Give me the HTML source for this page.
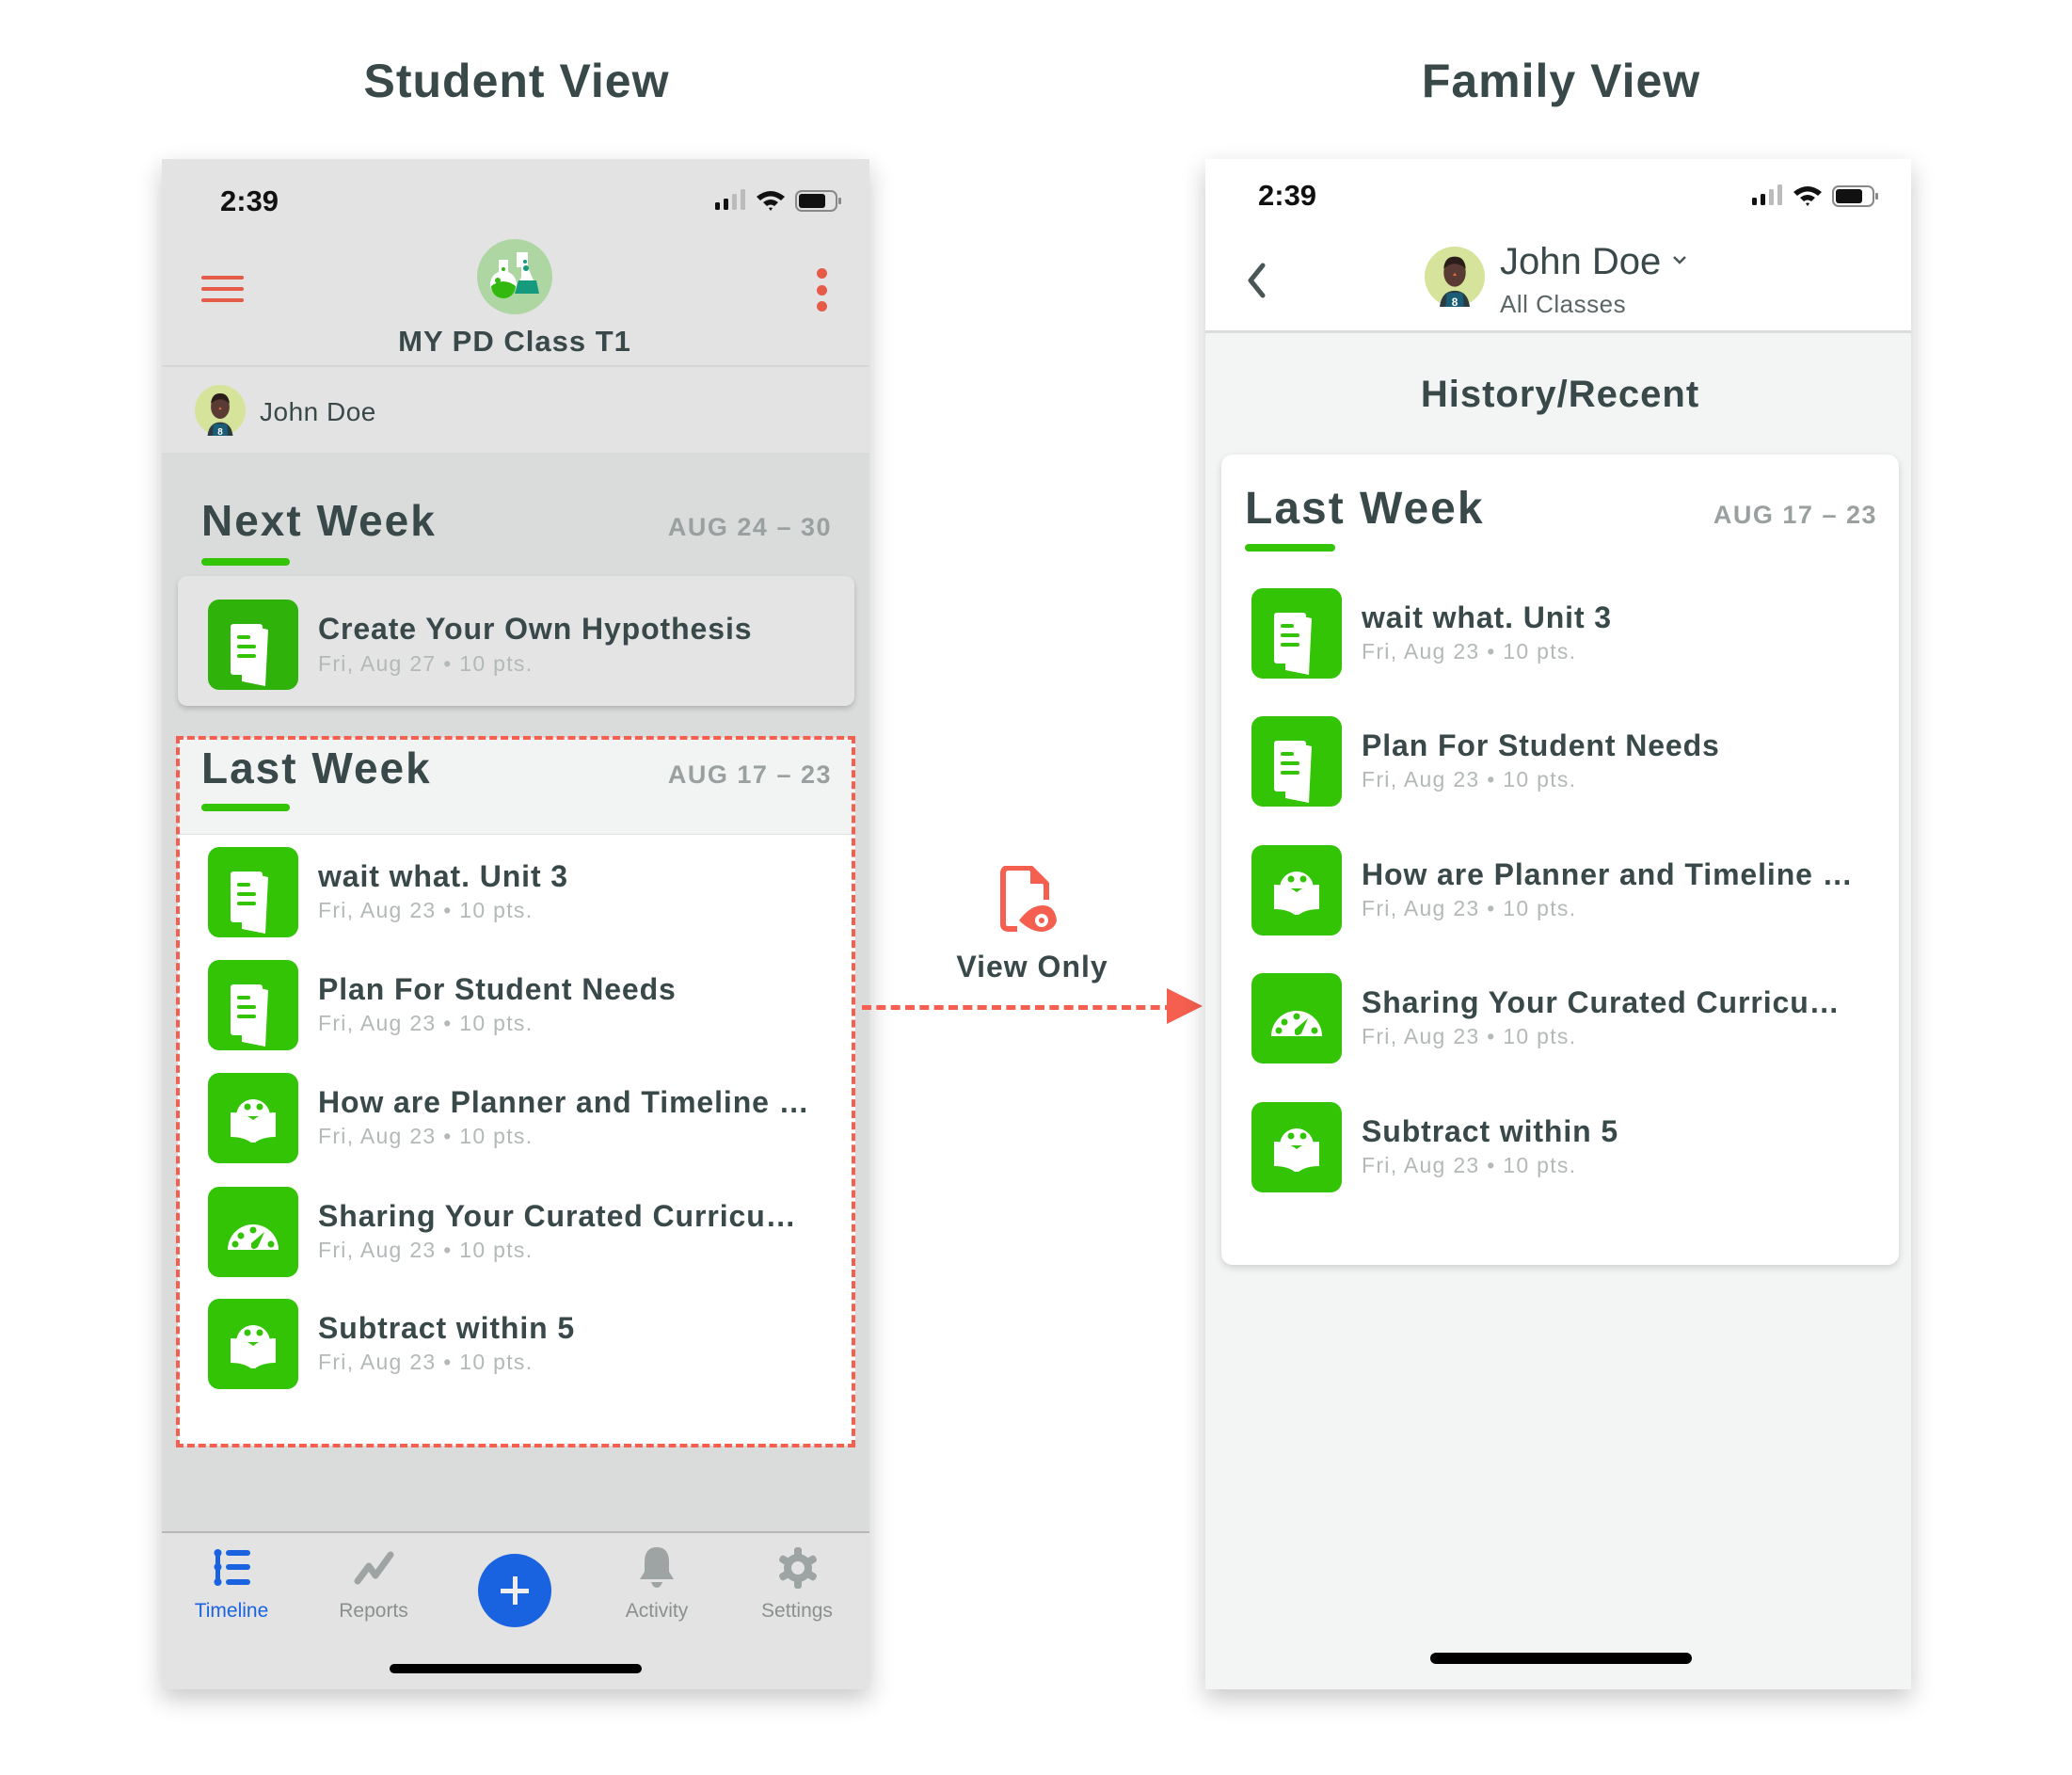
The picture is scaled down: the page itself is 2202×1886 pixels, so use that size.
<!DOCTYPE html>
<html><head><meta charset="utf-8">
<style>
*{margin:0;padding:0;box-sizing:border-box}
body{width:2202px;height:1886px;background:#fff;position:relative;overflow:hidden;font-family:"Liberation Sans",sans-serif;color:#394849}
.a{position:absolute;white-space:nowrap}
.h1{font-size:50px;font-weight:bold;color:#394849;transform:translateX(-50%);letter-spacing:1px}
.phone{position:absolute;top:169px;height:1626px;box-shadow:0 10px 24px rgba(0,0,0,.22)}
.ico{position:absolute;width:96px;height:96px;border-radius:12px;background:#33c406}
.t{font-size:32px;font-weight:bold;color:#394849;letter-spacing:0.9px}
.s{font-size:23px;color:#b3b8b8;letter-spacing:1.3px}
.wk{font-size:46px;font-weight:bold;color:#394849;letter-spacing:2px}
.dt{font-size:27px;font-weight:bold;color:#9aa0a0;letter-spacing:1.5px}
.ul{position:absolute;height:8px;border-radius:4px;background:#33c406}
</style></head><body>
<svg width="0" height="0" style="position:absolute">
<defs>
<symbol id="doc" viewBox="0 0 96 96">
<path d="M55 30 L64 32 L61 92 L36 87 L36 80 L55 80 Z" fill="#fff"/>
<rect x="24" y="26" width="34" height="54" rx="3" fill="#fff"/>
<rect x="31" y="38" width="14" height="4" rx="2" fill="#33c406"/>
<rect x="31" y="48" width="20" height="4" rx="2" fill="#33c406"/>
<rect x="31" y="58" width="20" height="4" rx="2" fill="#33c406"/>
</symbol>
<symbol id="book" viewBox="0 0 96 96">
<path d="M30 46 A18 18 0 0 1 66 46 Z" fill="#fff"/>
<circle cx="42" cy="36" r="3.5" fill="#33c406"/><circle cx="55" cy="36" r="3.5" fill="#33c406"/>
<path d="M24 42 Q38 42 48 50 Q58 42 72 42 L72 68 Q58 68 50 74 L46 74 Q38 68 24 68 Z" fill="#fff"/>
</symbol>
<symbol id="gauge" viewBox="0 0 96 96">
<path d="M21 67 A27 27 0 0 1 75 67 Z" fill="#fff"/>
<circle cx="48" cy="46" r="3.5" fill="#33c406"/><circle cx="35" cy="52" r="3.5" fill="#33c406"/>
<circle cx="29" cy="61" r="3.5" fill="#33c406"/><circle cx="67" cy="61" r="3.5" fill="#33c406"/>
<path d="M46 60 L60 48 L53 64 Q48 68 46 64 Z" fill="#33c406"/>
</symbol>
<symbol id="av" viewBox="0 0 60 60">
<circle cx="30" cy="30" r="30" fill="#d6e39a"/>
<path d="M15 60 Q17 44 30 44 Q43 44 45 60 Z" fill="#2c3b40"/>
<path d="M21 60 L22 46 L38 46 L39 60 Z" fill="#1a5d77"/>
<ellipse cx="30" cy="26" rx="11" ry="14" fill="#5a3b33"/>
<path d="M19 22 Q20 10 30 10 Q40 10 41 22 Q35 17 30 17 Q25 17 19 22Z" fill="#2a1d1a"/>
<path d="M28 29 L30 26 L32 29Z" fill="#e86a43"/>
<text x="30" y="59" font-size="11" fill="#fff" text-anchor="middle" font-family="Liberation Sans" font-weight="bold">8</text>
</symbol>
</defs></svg>

<div class="a h1" style="left:549px;top:57px">Student View</div>
<div class="a h1" style="left:1659px;top:57px">Family View</div>

<!-- LEFT PHONE -->
<div class="phone" style="left:172px;width:752px;background:#e3e3e3;overflow:hidden">
  <div class="a" style="left:0;top:219px;width:752px;height:2px;background:#d6d6d6"></div>
  <div class="a" style="left:0;top:312px;width:752px;height:1147px;background:#dadcdc"></div>
  <div class="a" style="left:0;top:1458px;width:752px;height:2px;background:#b8b8b8"></div>
</div>
<div class="a" style="left:234px;top:196px;font-size:31px;font-weight:bold;color:#111">2:39</div>
<svg class="a" style="left:760px;top:200px" width="135" height="28" viewBox="0 0 135 28">
<rect x="0" y="15" width="5" height="8" rx="1.5" fill="#111"/><rect x="9" y="11" width="5" height="12" rx="1.5" fill="#111"/>
<rect x="18" y="6" width="5" height="17" rx="1.5" fill="#bbb"/><rect x="27" y="1" width="5" height="22" rx="1.5" fill="#bbb"/>
<path d="M44 9 Q59 -3 74 9 L70 13 Q59 4 48 13Z M51 15 Q59 9 67 15 L63 19 Q59 16 55 19Z M57 21 L59 24 L61 21 Q59 20 57 21Z" fill="#111"/>
<rect x="86" y="3" width="43" height="21" rx="6" fill="none" stroke="#888" stroke-width="2"/>
<rect x="89" y="6" width="28" height="15" rx="3" fill="#111"/><rect x="131" y="10" width="3" height="7" rx="1" fill="#888"/>
</svg>
<div class="a" style="left:214px;top:293px;width:45px;height:4px;background:#e65a48;border-radius:2px"></div>
<div class="a" style="left:214px;top:305px;width:45px;height:4px;background:#e65a48;border-radius:2px"></div>
<div class="a" style="left:214px;top:317px;width:45px;height:4px;background:#e65a48;border-radius:2px"></div>
<div class="a" style="left:868px;top:285px;width:11px;height:11px;border-radius:50%;background:#e65a48"></div>
<div class="a" style="left:868px;top:303px;width:11px;height:11px;border-radius:50%;background:#e65a48"></div>
<div class="a" style="left:868px;top:320px;width:11px;height:11px;border-radius:50%;background:#e65a48"></div>
<svg class="a" style="left:507px;top:254px" width="80" height="80" viewBox="0 0 80 80">
<circle cx="40" cy="40" r="40" fill="#aed6a3"/>
<path d="M42 14 L54 14 L54 30 L66 58 L40 58 L47 40 L47 30 L42 30Z" fill="#fff"/>
<path d="M44 44 L63 44 L66 58 L40 58Z" fill="#169a7e"/>
<circle cx="52" cy="31" r="3" fill="#169a7e"/><circle cx="51" cy="24" r="2" fill="#169a7e"/>
<circle cx="28" cy="48" r="14" fill="#fff"/><rect x="23" y="22" width="10" height="16" fill="#fff"/>
<path d="M15 50 Q28 40 41 50 A13 13 0 0 1 15 50Z" fill="#33b80f"/>
<circle cx="22" cy="44" r="3" fill="#33b80f"/><circle cx="28" cy="32" r="2" fill="#33b80f"/>
</svg>
<div class="a" style="left:547px;top:345px;transform:translateX(-50%);font-size:31px;font-weight:bold;color:#394849;letter-spacing:1px">MY PD Class T1</div>
<svg class="a" style="left:207px;top:409px" width="54" height="54"><use href="#av"/></svg>
<div class="a" style="left:276px;top:422px;font-size:28px;color:#394849;letter-spacing:0.5px">John Doe</div>

<div class="a wk" style="left:214px;top:526px">Next Week</div>
<div class="a dt" style="right:1318px;top:545px">AUG 24 – 30</div>
<div class="ul" style="left:214px;top:593px;width:94px"></div>
<div class="a" style="left:189px;top:612px;width:719px;height:138px;background:#e4e4e4;border-radius:10px;box-shadow:0 3px 6px rgba(0,0,0,.18)"></div>
<div class="ico" style="left:221px;top:637px;background:#2fb20a"><svg width="96" height="96"><use href="#doc"/></svg></div>
<div class="a t" style="left:338px;top:650px">Create Your Own Hypothesis</div>
<div class="a s" style="left:338px;top:692px">Fri, Aug 27 • 10 pts.</div>

<div class="a" style="left:189px;top:784px;width:720px;height:102px;background:#f2f4f3"></div>
<div class="a" style="left:189px;top:886px;width:720px;height:650px;background:#fff;border-top:1px solid #dfe2e2"></div>
<div class="a" style="left:187px;top:782px;width:722px;height:756px;border:4px dashed #f45f4f"></div>
<div class="a wk" style="left:214px;top:789px">Last Week</div>
<div class="a dt" style="right:1318px;top:808px">AUG 17 – 23</div>
<div class="ul" style="left:214px;top:854px;width:94px"></div>

<div class="ico" style="left:221px;top:900px"><svg width="96" height="96"><use href="#doc"/></svg></div>
<div class="a t" style="left:338px;top:913px">wait what. Unit 3</div>
<div class="a s" style="left:338px;top:954px">Fri, Aug 23 • 10 pts.</div>
<div class="ico" style="left:221px;top:1020px"><svg width="96" height="96"><use href="#doc"/></svg></div>
<div class="a t" style="left:338px;top:1033px">Plan For Student Needs</div>
<div class="a s" style="left:338px;top:1074px">Fri, Aug 23 • 10 pts.</div>
<div class="ico" style="left:221px;top:1140px"><svg width="96" height="96"><use href="#book"/></svg></div>
<div class="a t" style="left:338px;top:1153px">How are Planner and Timeline …</div>
<div class="a s" style="left:338px;top:1194px">Fri, Aug 23 • 10 pts.</div>
<div class="ico" style="left:221px;top:1261px"><svg width="96" height="96"><use href="#gauge"/></svg></div>
<div class="a t" style="left:338px;top:1274px">Sharing Your Curated Curricu…</div>
<div class="a s" style="left:338px;top:1315px">Fri, Aug 23 • 10 pts.</div>
<div class="ico" style="left:221px;top:1380px"><svg width="96" height="96"><use href="#book"/></svg></div>
<div class="a t" style="left:338px;top:1393px">Subtract within 5</div>
<div class="a s" style="left:338px;top:1434px">Fri, Aug 23 • 10 pts.</div>

<svg class="a" style="left:226px;top:1646px" width="42" height="40" viewBox="0 0 42 40">
<rect x="3" y="2" width="5" height="36" rx="2.5" fill="#1a63e0"/>
<circle cx="5.5" cy="4" r="4" fill="#1a63e0"/><circle cx="5.5" cy="19" r="4" fill="#1a63e0"/><circle cx="5.5" cy="35" r="4" fill="#1a63e0"/>
<rect x="14" y="1" width="26" height="6" rx="3" fill="#1a63e0"/><rect x="14" y="16" width="26" height="6" rx="3" fill="#1a63e0"/><rect x="14" y="32" width="26" height="6" rx="3" fill="#1a63e0"/>
</svg>
<div class="a" style="left:246px;top:1700px;transform:translateX(-50%);font-size:21px;color:#1a63e0">Timeline</div>
<svg class="a" style="left:374px;top:1646px" width="48" height="40" viewBox="0 0 48 40">
<path d="M6 34 L18 18 L25 28 L41 6" fill="none" stroke="#9ea3a3" stroke-width="7" stroke-linecap="round" stroke-linejoin="round"/>
</svg>
<div class="a" style="left:397px;top:1700px;transform:translateX(-50%);font-size:21px;color:#8a8f8f">Reports</div>
<div class="a" style="left:508px;top:1651px;width:78px;height:78px;border-radius:50%;background:#1a63e0"></div>
<div class="a" style="left:545px;top:1675px;width:5px;height:30px;background:#eee"></div>
<div class="a" style="left:532px;top:1688px;width:30px;height:5px;background:#eee"></div>
<svg class="a" style="left:678px;top:1642px" width="40" height="46" viewBox="0 0 40 46">
<path d="M20 2 Q33 2 33 18 L33 28 L38 36 L2 36 L7 28 L7 18 Q7 2 20 2Z" fill="#9ea3a3"/>
<path d="M14 39 L26 39 Q24 45 20 45 Q16 45 14 39Z" fill="#9ea3a3"/>
</svg>
<div class="a" style="left:698px;top:1700px;transform:translateX(-50%);font-size:21px;color:#8a8f8f">Activity</div>
<svg class="a" style="left:826px;top:1643px" width="44" height="46" viewBox="0 0 44 46">
<g fill="#9ea3a3"><circle cx="22" cy="23" r="15"/>
<rect x="18" y="1" width="8" height="44" rx="3"/><rect x="18" y="1" width="8" height="44" rx="3" transform="rotate(60 22 23)"/><rect x="18" y="1" width="8" height="44" rx="3" transform="rotate(120 22 23)"/></g>
<circle cx="22" cy="23" r="7" fill="#e3e3e3"/>
</svg>
<div class="a" style="left:847px;top:1700px;transform:translateX(-50%);font-size:21px;color:#8a8f8f">Settings</div>
<div class="a" style="left:414px;top:1768px;width:268px;height:10px;border-radius:5px;background:#000"></div>

<svg class="a" style="left:1062px;top:920px" width="62" height="72" viewBox="0 0 62 72">
<path d="M10 2 L33 2 L50 19 L50 36" fill="none" stroke="#f45f4f" stroke-width="6" stroke-linejoin="round"/>
<path d="M10 2 Q4 2 4 8 L4 62 Q4 67 10 67 L19 67" fill="none" stroke="#f45f4f" stroke-width="6"/>
<path d="M33 2 L33 19 L50 19Z" fill="#f45f4f"/>
<path d="M21 58 Q33 42 46 42 Q59 42 61 58 Q59 68 46 70 Q33 70 21 58Z" fill="#f45f4f"/>
<circle cx="45" cy="58" r="7" fill="#fff"/><circle cx="45" cy="58" r="3" fill="#f45f4f"/>
</svg>
<div class="a" style="left:1097px;top:1009px;transform:translateX(-50%);font-size:32px;font-weight:bold;color:#394849;letter-spacing:1px">View Only</div>
<div class="a" style="left:916px;top:1068px;width:332px;border-top:5px dashed #f45f4f"></div>
<svg class="a" style="left:1240px;top:1050px" width="40" height="40"><path d="M0 0 L38 19 L0 38Z" fill="#f45f4f"/></svg>

<!-- RIGHT PHONE -->
<div class="phone" style="left:1281px;width:750px;background:#f3f5f4;overflow:hidden">
  <div class="a" style="left:0;top:0;width:750px;height:182px;background:#fff"></div>
  <div class="a" style="left:0;top:182px;width:750px;height:3px;background:#dadddd"></div>
</div>
<div class="a" style="left:1337px;top:190px;font-size:31px;font-weight:bold;color:#111">2:39</div>
<svg class="a" style="left:1862px;top:195px" width="135" height="28" viewBox="0 0 135 28">
<rect x="0" y="15" width="5" height="8" rx="1.5" fill="#111"/><rect x="9" y="11" width="5" height="12" rx="1.5" fill="#111"/>
<rect x="18" y="6" width="5" height="17" rx="1.5" fill="#bbb"/><rect x="27" y="1" width="5" height="22" rx="1.5" fill="#bbb"/>
<path d="M44 9 Q59 -3 74 9 L70 13 Q59 4 48 13Z M51 15 Q59 9 67 15 L63 19 Q59 16 55 19Z M57 21 L59 24 L61 21 Q59 20 57 21Z" fill="#111"/>
<rect x="86" y="3" width="43" height="21" rx="6" fill="none" stroke="#888" stroke-width="2"/>
<rect x="89" y="6" width="28" height="15" rx="3" fill="#111"/><rect x="131" y="10" width="3" height="7" rx="1" fill="#888"/>
</svg>
<svg class="a" style="left:1324px;top:279px" width="24" height="38"><path d="M18 3 L5 19 L18 35" fill="none" stroke="#4a5656" stroke-width="5" stroke-linecap="round" stroke-linejoin="round"/></svg>
<svg class="a" style="left:1514px;top:262px" width="64" height="64"><use href="#av"/></svg>
<div class="a" style="left:1594px;top:256px;font-size:40px;color:#394849">John Doe</div>
<svg class="a" style="left:1777px;top:270px" width="16" height="12"><path d="M2 3 L8 9 L14 3" fill="none" stroke="#4a5656" stroke-width="2.5"/></svg>
<div class="a" style="left:1594px;top:308px;font-size:26px;color:#5b6666;letter-spacing:0.5px">All Classes</div>
<div class="a" style="left:1658px;top:397px;transform:translateX(-50%);font-size:40px;font-weight:bold;color:#394849;letter-spacing:1px">History/Recent</div>

<div class="a" style="left:1298px;top:483px;width:720px;height:861px;background:#fff;border-radius:12px;box-shadow:0 3px 8px rgba(0,0,0,.15)"></div>
<div class="a wk" style="left:1323px;top:513px;font-size:48px">Last Week</div>
<div class="a dt" style="right:207px;top:532px">AUG 17 – 23</div>
<div class="ul" style="left:1323px;top:578px;width:96px"></div>

<div class="ico" style="left:1330px;top:625px"><svg width="96" height="96"><use href="#doc"/></svg></div>
<div class="a t" style="left:1447px;top:638px">wait what. Unit 3</div>
<div class="a s" style="left:1447px;top:679px">Fri, Aug 23 • 10 pts.</div>
<div class="ico" style="left:1330px;top:761px"><svg width="96" height="96"><use href="#doc"/></svg></div>
<div class="a t" style="left:1447px;top:774px">Plan For Student Needs</div>
<div class="a s" style="left:1447px;top:815px">Fri, Aug 23 • 10 pts.</div>
<div class="ico" style="left:1330px;top:898px"><svg width="96" height="96"><use href="#book"/></svg></div>
<div class="a t" style="left:1447px;top:911px">How are Planner and Timeline …</div>
<div class="a s" style="left:1447px;top:952px">Fri, Aug 23 • 10 pts.</div>
<div class="ico" style="left:1330px;top:1034px"><svg width="96" height="96"><use href="#gauge"/></svg></div>
<div class="a t" style="left:1447px;top:1047px">Sharing Your Curated Curricu…</div>
<div class="a s" style="left:1447px;top:1088px">Fri, Aug 23 • 10 pts.</div>
<div class="ico" style="left:1330px;top:1171px"><svg width="96" height="96"><use href="#book"/></svg></div>
<div class="a t" style="left:1447px;top:1184px">Subtract within 5</div>
<div class="a s" style="left:1447px;top:1225px">Fri, Aug 23 • 10 pts.</div>

<div class="a" style="left:1520px;top:1756px;width:278px;height:12px;border-radius:6px;background:#000"></div>
</body></html>
